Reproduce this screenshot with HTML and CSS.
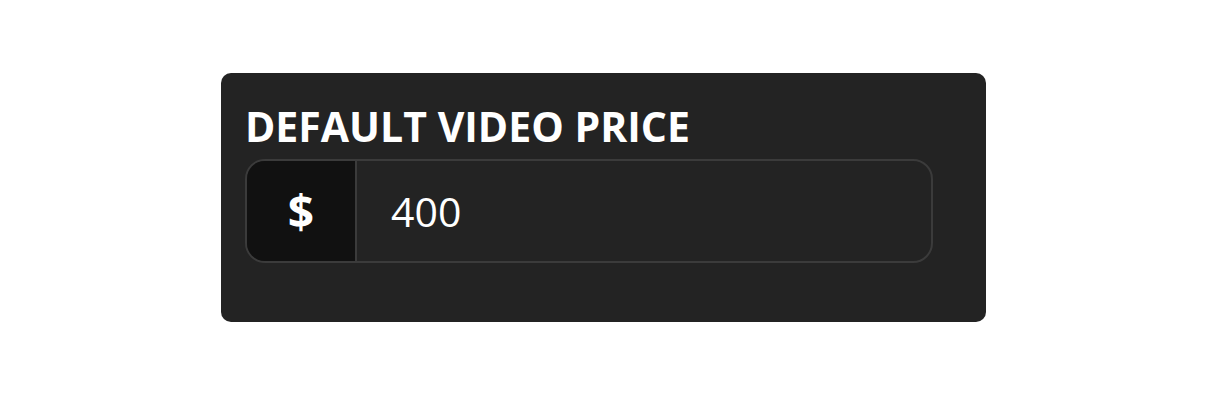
FILE: index.html
```html
<!DOCTYPE html>
<html>
<head>
    <title>Default Video Price</title>
    <link rel="stylesheet" href="styles.css">
</head>
<body>
    <div class="price-card">
        <label class="price-label" for="price">DEFAULT VIDEO PRICE</label>
        <div class="price-group">
            <span class="price-prefix">$</span>
            <input type="text" id="price" class="price-input" value="400">
        </div>
    </div>
</body>
</html>
```
FILE: styles.css
```css
body {
    margin: 0;
    padding: 73px 0 0 221px;
    background-color: #fff;
    font-family: 'Open Sans', sans-serif;
}

.price-card {
    width: 765px;
    height: 249px;
    box-sizing: border-box;
    padding: 27px 53px 0 24px;
    background-color: #232323;
    border-radius: 10px;
}

.price-label {
    display: block;
    font-weight: bold;
    font-size: 41px;
    line-height: 53px;
    color: #fff;
    margin-bottom: 6px;
}

.price-group {
    display: flex;
    height: 104px;
    box-sizing: border-box;
    border: 2px solid #3b3b3b;
    border-radius: 20px;
    overflow: hidden;
}

.price-prefix {
    width: 108px;
    display: flex;
    align-items: center;
    justify-content: center;
    background-color: #111;
    border-right: 2px solid #3b3b3b;
    color: #fff;
    font-weight: bold;
    font-size: 46px;
}

.price-input {
    flex: 1;
    border: none;
    outline: none;
    background: transparent;
    color: #fff;
    font-family: 'Open Sans', sans-serif;
    font-size: 41px;
    padding: 0 0 0 34px;
}
```
